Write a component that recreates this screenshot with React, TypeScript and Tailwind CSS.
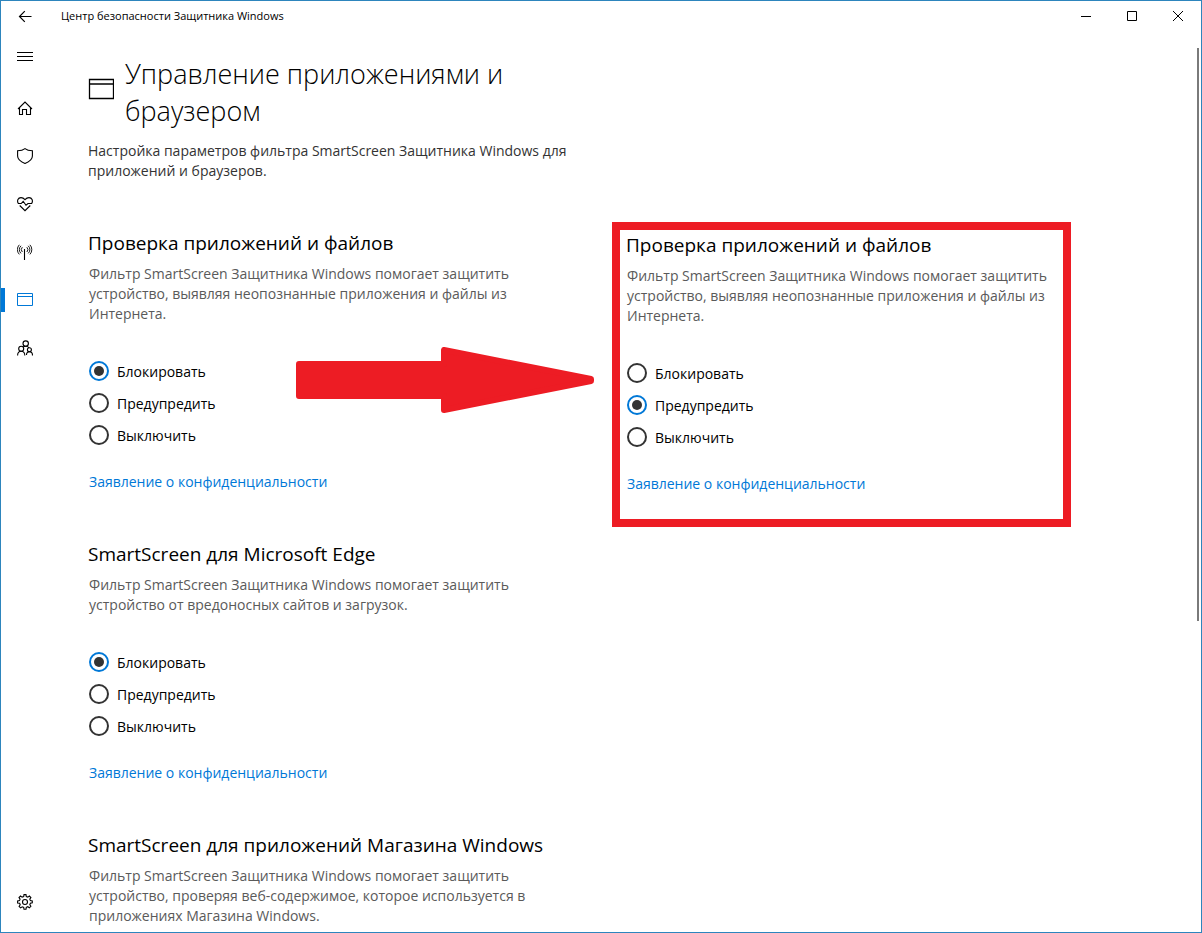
import type { ReactNode } from "react";

const OPTIONS = ["Блокировать", "Предупредить", "Выключить"];

function Icon({ children }: { children: ReactNode }) {
  return (
    <svg viewBox="0 0 16 16" className="size-4" fill="none" stroke="currentColor" strokeWidth="1.1" aria-hidden="true">
      {children}
    </svg>
  );
}

const BackIcon = () => (
  <Icon>
    <path d="M2.5 8.5H14.500M7.800 3.200l-5.300 5.300 5.300 5.300" strokeWidth="1.200" />
  </Icon>
);
const MenuIcon = () => (
  <Icon>
    <path d="M0 3.500h16M0 7.500h16M0 11.500h16" strokeWidth="1" />
  </Icon>
);
const HomeIcon = () => (
  <Icon>
    <path d="M1 9L8 2l7 7M2.500 7.500v7h3v-5h4v5h4v-7" />
  </Icon>
);
const ShieldIcon = () => (
  <Icon>
    <path d="M8 .6C6.300 2 3.500 2.700.6 2.700V8c0 3.500 3.400 5.900 7.400 7.500C12 13.900 15.400 11.500 15.400 8V2.700C12.500 2.700 9.700 2 8 .6z" />
  </Icon>
);
const HeartIcon = () => (
  <Icon>
    <path d="M1.300 7.500C-.3 4.800 1 1.600 4 1.600c1.800 0 3 .9 4 2 1-1.100 2.200-2 4-2 3 0 4.300 3.200 2.700 5.900M2.700 9.500L8 14.700l5.300-5.200" />
    <path d="M1 7.500h3.200l2-2.200L9 9.200l2-1.700h4" />
  </Icon>
);
const SignalIcon = () => (
  <Icon>
    <path d="M7.500 5V16" />
    <path d="M5.300 3.200a3.600 3.600 0 0 0 0 4.800M9.900 3.200a3.600 3.600 0 0 1 0 4.800M4 1.800a5.200 5.200 0 0 0 0 7.600M11.200 1.800a5.200 5.200 0 0 1 0 7.600M2.300.8a7 7 0 0 0 0 9.600M12.900.8a7 7 0 0 1 0 9.600" strokeWidth=".9" />
  </Icon>
);
const WindowIcon = () => (
  <Icon>
    <path d="M.5 1.500h15v12H.5zM0 4.500h16" strokeWidth="1" />
  </Icon>
);
const FamilyIcon = () => (
  <Icon>
    <circle cx="8.700" cy="3.600" r="2.700" />
    <circle cx="4.200" cy="8.800" r="2.500" />
    <circle cx="12.400" cy="9.800" r="2" />
    <path d="M.6 15.500c0-2.500 1.500-4.200 3.600-4.200s3.600 1.700 3.600 4.200M9.500 15c0-2 1.300-3.200 2.900-3.200s3.100 1.500 3.100 3.700M6 7c.7-.5 1.500-.8 2.700-.8 1.500 0 2.700.6 3.200 1.800" />
  </Icon>
);
const GearIcon = () => (
  <Icon>
    <path d="M6.700 2.500L7 .6h2l.3 1.900 1.500.6 1.600-1.100 1.500 1.500-1.100 1.600.6 1.500 1.900.3v2l-1.900.3-.6 1.500 1.100 1.600-1.500 1.500-1.600-1.100-1.500.6L9 15.300H7l-.3-1.900-1.500-.6-1.600 1.100-1.500-1.500 1.100-1.600-.6-1.500L.6 9V7l1.900-.4.600-1.500L2 3.500 3.500 2l1.600 1.100z" />
    <circle cx="8" cy="8" r="2.500" />
  </Icon>
);

const NAV = [
  { label: "Домой", icon: <HomeIcon />, active: false },
  { label: "Защита от вирусов", icon: <ShieldIcon />, active: false },
  { label: "Работоспособность устройства", icon: <HeartIcon />, active: false },
  { label: "Брандмауэр", icon: <SignalIcon />, active: false },
  { label: "Приложения и браузер", icon: <WindowIcon />, active: true },
  { label: "Семья", icon: <FamilyIcon />, active: false },
];

type SectionProps = { id: string; title: string; text: string; selected?: number };

function Section({ id, title, text, selected }: SectionProps) {
  return (
    <section>
      <h2 id={id} className="text-[19px] leading-[26px]">{title}</h2>
      <div className="pl-px">
        <p className="mt-2 max-w-[460px] text-[14px] leading-5 text-[#5a5a5a]">{text}</p>
        {selected !== undefined && (
          <>
            <div role="radiogroup" aria-labelledby={id} className="mt-[31px] flex flex-col items-start">
              {OPTIONS.map((option, i) => (
                <label key={option} className="flex h-8 items-center gap-2 text-[14px]">
                  <input
                    type="radio"
                    name={id}
                    defaultChecked={i === selected}
                    className="grid size-5 appearance-none place-content-center rounded-full border-2 border-[#333] before:size-2.5 before:rounded-full checked:border-[#0078d7] checked:before:bg-[#333]"
                  />
                  {option}
                </label>
              ))}
            </div>
            <a href="#privacy" className="mt-[21px] block w-fit text-[14px] leading-5 text-[#0078d7]">
              Заявление о конфиденциальности
            </a>
          </>
        )}
      </div>
    </section>
  );
}

const FILES_TEXT =
  "Фильтр SmartScreen Защитника Windows помогает защитить устройство, выявляя неопознанные приложения и файлы из Интернета.";

export default function App() {
  return (
    <div className="relative flex h-screen flex-col overflow-hidden border border-[#2d85bd] bg-white font-['Open_Sans','Noto_Sans',sans-serif] text-black">
      <header className="flex h-[30px] shrink-0 items-center">
        <button aria-label="Назад" className="flex h-full w-12 items-center justify-center">
          <BackIcon />
        </button>
        <span className="ml-3 flex-1 text-[11px]">Центр безопасности Защитника Windows</span>
        <button aria-label="Свернуть" className="flex h-full w-[46px] items-center justify-center">
          <svg className="size-3" viewBox="0 0 12 12" stroke="currentColor"><path d="M1 6.500h10" /></svg>
        </button>
        <button aria-label="Развернуть" className="flex h-full w-[46px] items-center justify-center">
          <svg className="size-3" viewBox="0 0 12 12" stroke="currentColor" fill="none"><path d="M1.500 1.500h9v9h-9z" /></svg>
        </button>
        <button aria-label="Закрыть" className="flex h-full w-[46px] items-center justify-center">
          <svg className="size-3" viewBox="0 0 12 12" stroke="currentColor"><path d="M1 1l10 10M11 1l-10 10" /></svg>
        </button>
      </header>

      <div className="flex min-h-0 flex-1">
        <nav className="flex w-12 shrink-0 flex-col pb-1.5">
          <button aria-label="Меню" className="flex h-[52px] items-center justify-center">
            <MenuIcon />
          </button>
          <div className="flex flex-col pt-px">
            {NAV.map((item) => (
              <button
                key={item.label}
                aria-label={item.label}
                className={
                  item.active
                    ? "flex h-12 items-center justify-center bg-[linear-gradient(#0078d7,#0078d7)] bg-[length:4px_24px] bg-[position:left_center] bg-no-repeat text-[#0078d7]"
                    : "flex h-12 items-center justify-center"
                }
              >
                {item.icon}
              </button>
            ))}
          </div>
          <button aria-label="Параметры" className="mt-auto flex h-12 items-center justify-center">
            <GearIcon />
          </button>
        </nav>

        <main className="min-w-0 flex-1 overflow-hidden pt-6 pl-[39px]">
          <div className="flex items-start gap-[11px]">
            <svg className="mt-[23px] h-[22px] w-[26px] shrink-0" viewBox="0 0 26 22" fill="none" stroke="currentColor" aria-hidden="true">
              <path d="M1.500 1.500h24v19h-24z" strokeWidth="1.300" />
              <path d="M1 6h24" strokeWidth="1.500" />
            </svg>
            <h1 className="max-w-[420px] text-[27px] leading-[37px] font-light">Управление приложениями и браузером</h1>
          </div>
          <p className="mt-3 max-w-[490px] text-[14px] leading-5 text-[#333]">
            Настройка параметров фильтра SmartScreen Защитника Windows для приложений и браузеров.
          </p>

          <div className="mt-[41px] grid grid-cols-[524px_459px] items-start">
            <div className="relative flex flex-col gap-[49px] pt-2">
              <Section id="files" title="Проверка приложений и файлов" text={FILES_TEXT} selected={0} />
              <Section
                id="edge"
                title="SmartScreen для Microsoft Edge"
                text="Фильтр SmartScreen Защитника Windows помогает защитить устройство от вредоносных сайтов и загрузок."
                selected={0}
              />
              <Section
                id="store"
                title="SmartScreen для приложений Магазина Windows"
                text="Фильтр SmartScreen Защитника Windows помогает защитить устройство, проверяя веб-содержимое, которое используется в приложениях Магазина Windows."
              />
              <svg className="absolute top-[125px] left-[208px] h-[66px] w-[299px] text-[#ed1c24]" viewBox="0 0 299 66" fill="currentColor" stroke="currentColor" strokeWidth="6" strokeLinejoin="round" aria-hidden="true">
                <path d="M3 17v32h145v14l147-29v-2L148 3v14z" />
              </svg>
            </div>
            <div className="border-8 border-[#ed1c24] px-1.5 pt-0.5 pb-[25px]">
              <Section id="files-after" title="Проверка приложений и файлов" text={FILES_TEXT} selected={1} />
            </div>
          </div>
        </main>
      </div>
      <div className="absolute top-[47px] right-0.5 h-[573px] w-0.5 bg-[#7a7a7a]" />
    </div>
  );
}
